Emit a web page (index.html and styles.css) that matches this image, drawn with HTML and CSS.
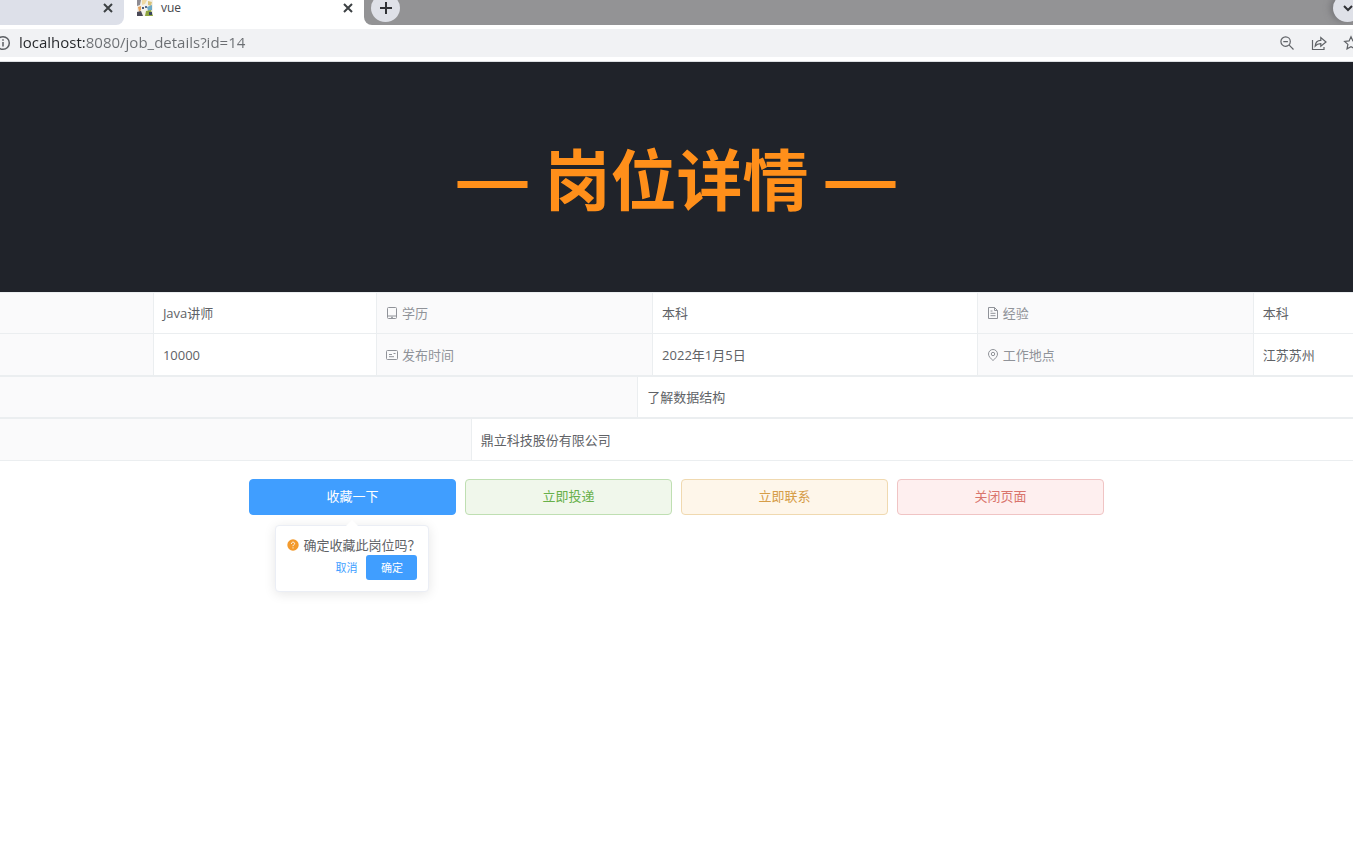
FILE: index.html
```html
<!DOCTYPE html>
<html lang="zh-CN">
<head>
<meta charset="utf-8">
<title>vue</title>
<link rel="stylesheet" href="styles.css">
</head>
<body>
<header class="browser">
  <div class="tabs">
    <div class="tab tab-idle">
      <button class="close" aria-label="关闭标签页"><svg width="10" height="10" viewBox="0 0 10 10"><path d="M1 1l8 8M9 1L1 9"/></svg></button>
    </div>
    <div class="tab tab-active">
      <svg class="favicon" width="16" height="16" viewBox="0 0 16 16">
        <rect width="16" height="16" fill="#f4f1ea"/>
        <path d="M0 0h4L3 5 0 6z" fill="#8d8b92"/><path d="M5 0h5L8 4 5 5z" fill="#f0d9a4"/>
        <path d="M11 1l4 1-1 4-3-1z" fill="#d8c279"/><path d="M1 7l3-1v4l-2 2z" fill="#e5a25c"/>
        <path d="M10 7l5-2v5l-4 1z" fill="#6eaac7"/><path d="M0 12l4-1 2 5H0z" fill="#4b4a58"/>
        <path d="M9 11l5-1 2 6H8z" fill="#8da53f"/><path d="M12 12h3v3h-3z" fill="#39465e"/>
        <path d="M5 7h2v2H5z" fill="#4d5b78"/><path d="M8 6h2v2H8z" fill="#5b6d93"/>
      </svg>
      <span class="tab-title">vue</span>
      <button class="close" aria-label="关闭标签页"><svg width="10" height="10" viewBox="0 0 10 10"><path d="M1 1l8 8M9 1L1 9"/></svg></button>
    </div>
    <div class="strip">
      <button class="round" aria-label="新标签页"><svg width="14" height="14" viewBox="0 0 14 14"><path d="M7 1v12M1 7h12"/></svg></button>
      <button class="round round-end" aria-label="搜索标签页"><svg width="12" height="12" viewBox="0 0 12 12"><path d="M2 4l4 4 4-4"/></svg></button>
    </div>
  </div>
  <div class="address">
    <svg class="info" width="16" height="16" viewBox="0 0 16 16"><circle cx="8" cy="8" r="6.3"/><path d="M8 7v4.5M8 4.2v1.6"/></svg>
    <input class="url" type="text" aria-label="地址" value="localhost:8080/job_details?id=14">
    <div class="tools">
      <button class="tool" aria-label="缩放"><svg width="16" height="16" viewBox="0 0 16 16"><circle cx="6.6" cy="6.6" r="4.7"/><path d="M4.3 6.6h4.6M10.2 10.2l4.3 4.3"/></svg></button>
      <button class="tool" aria-label="分享"><svg width="16" height="16" viewBox="0 0 16 16"><path d="M1.500 5v9.500h11.500V12M4.200 11c.3-3.800 2.300-5.700 5.600-5.700V2.500L15 7l-5.200 4.300V8.600C7.300 8.600 5.600 9.300 4.200 11z"/></svg></button>
      <button class="tool" aria-label="收藏网页"><svg width="16" height="16" viewBox="0 0 16 16"><path d="M8 1.800l1.900 4.100 4.500.5-3.300 3 .9 4.500L8 11.700l-4 2.200.9-4.500-3.300-3 4.500-.5z"/></svg></button>
    </div>
  </div>
</header>
<main>
  <div class="hero">
    <h1 class="title"><span class="dash">—</span><span>岗位详情</span><span class="dash">—</span></h1>
  </div>
  <table class="info-table">
    <colgroup><col class="c1"><col class="c2"><col class="c3"><col class="c4"><col class="c3"><col></colgroup>
    <tr>
      <td class="blank"></td><td>Java讲师</td>
      <th scope="row"><svg class="ico" width="12" height="12" viewBox="0 0 12 12"><rect x="1.500" y=".5" width="9" height="11" rx="1"/><path d="M1.500 9h9M5 10.300h2"/></svg>学历</th><td>本科</td>
      <th scope="row"><svg class="ico" width="12" height="12" viewBox="0 0 12 12"><path d="M1.500.5h6l3 3v8h-9zM7.500.5v3h3M3.500 4h2M3.500 6.300h5M3.500 8.700h5"/></svg>经验</th><td>本科</td>
    </tr>
    <tr class="tall">
      <td class="blank"></td><td>10000</td>
      <th scope="row"><svg class="ico" width="12" height="12" viewBox="0 0 12 12"><rect x=".5" y="1.500" width="11" height="9" rx="1"/><path d="M3 5.500h3M3 7.700h5M7.500 4.500h2"/></svg>发布时间</th><td>2022年1月5日</td>
      <th scope="row"><svg class="ico" width="12" height="12" viewBox="0 0 12 12"><path d="M6 11.500C3.500 9.300 1.500 7.400 1.500 5a4.500 4.500 0 019 0c0 2.400-2 4.300-4.500 6.500z"/><circle cx="6" cy="5" r="1.700"/></svg>工作地点</th><td>江苏苏州</td>
    </tr>
  </table>
  <table class="info-table">
    <colgroup><col class="skill"><col></colgroup>
    <tr><td class="blank"></td><td>了解数据结构</td></tr>
  </table>
  <table class="info-table">
    <colgroup><col class="firm"><col></colgroup>
    <tr class="tall"><td class="blank"></td><td>鼎立科技股份有限公司</td></tr>
  </table>
  <div class="actions">
    <div class="anchor">
      <button class="btn primary">收藏一下</button>
      <div class="pop" role="dialog" aria-labelledby="ask">
        <p class="ask"><svg width="12" height="12" viewBox="0 0 12 12"><circle cx="6" cy="6" r="5.700" fill="#f39a2d"/><path d="M4.400 4.800c0-2.200 3.300-2.100 3.200-.1C7.500 5.800 6 5.800 6 7.200M6 8.400v1" fill="none" stroke="#fff"/></svg><span id="ask">确定收藏此岗位吗？</span></p>
        <div class="pop-actions"><button class="cancel">取消</button><button class="ok">确定</button></div>
      </div>
    </div>
    <button class="btn success">立即投递</button>
    <button class="btn warning">立即联系</button>
    <button class="btn danger">关闭页面</button>
  </div>
</main>
</body>
</html>
```
FILE: styles.css
```css
* { box-sizing: border-box; }
body {
  margin: 0;
  min-height: 100vh;
  background: #fff;
  color: #606266;
  font: 13px/20px "Open Sans", "Noto Sans CJK SC", sans-serif;
}
button, input { font: inherit; }
button { margin: 0; padding: 0; border: 0; background: none; cursor: pointer; }
svg { display: block; flex: none; }

/* browser bar */
.browser { border-bottom: 1px solid #dcdfe2; background: #fff; }
.tabs { display: flex; height: 25px; overflow: hidden; }
.tab { display: flex; align-items: center; padding: 0 11px 9px 13px; }
.tab-idle { width: 124px; justify-content: flex-end; background: #dde0e9; border-radius: 0 0 8px 0; }
.tab-active { width: 240px; }
.tab-title { flex: 1; margin-left: 8px; font-size: 12px; color: #45474b; }
.close svg { fill: none; stroke: #3c4043; stroke-width: 2; }
.strip {
  flex: 1;
  display: flex;
  justify-content: space-between;
  align-items: flex-end;
  padding: 0 0 3px 7px;
  background: #939395;
  border-radius: 0 0 0 8px;
}
.round {
  display: grid;
  place-items: center;
  flex: none;
  width: 29px;
  height: 28px;
  border-radius: 50%;
  background: #dfe1e8;
}
.round svg { fill: none; stroke: #303236; stroke-width: 2; }
.round-end { margin-right: -9px; box-shadow: -3px 0 6px #77777a; }
.address {
  display: flex;
  align-items: center;
  height: 28px;
  margin: 4px 0;
  background: #f1f2f4;
  overflow: hidden;
}
.info { margin-left: -5px; fill: none; stroke: #5b5e62; stroke-width: 1.5; }
.url {
  flex: 1;
  min-width: 0;
  height: 28px;
  margin-left: 8px;
  padding: 0 0 2px;
  border: 0;
  outline: 0;
  font-size: 15px;
  background: linear-gradient(90deg, #25272a 66px, #6b6e72 66px);
  -webkit-background-clip: text;
  background-clip: text;
  color: transparent;
}
.tools { display: flex; gap: 16px; margin-right: -6px; }
.tool svg { fill: none; stroke: #606367; stroke-width: 1.2; }

/* heading */
.hero {
  display: flex;
  justify-content: center;
  align-items: center;
  height: 230px;
  padding-top: 4px;
  background: #20232a;
}
.title {
  display: flex;
  align-items: center;
  gap: 17px;
  margin: 0;
  color: #ff8f1a;
  font-size: 66px;
  line-height: 80px;
  font-weight: 700;
}
.dash { font-family: "Liberation Sans", sans-serif; font-size: 70px; }

/* details */
.info-table { width: 100%; table-layout: fixed; border-collapse: separate; border-spacing: 0; border-bottom: 1px solid #ebeef0; }
.info-table td, .info-table th {
  height: 41px;
  padding: 0 9px;
  border-top: 1px solid #ebeef0;
  border-left: 1px solid #ebeef0;
  text-align: left;
  font-weight: 400;
}
.info-table .tall td, .info-table .tall th { height: 42px; }
.info-table th { background: #fafafb; color: #909399; }
.info-table .blank { background: #fafafb; border-left: 0; }
.ico { display: inline-block; margin-right: 4px; vertical-align: -1px; fill: none; stroke: #909399; }
.c1 { width: 11.3%; }
.c2 { width: 16.5%; }
.c3 { width: 20.4%; }
.c4 { width: 24%; }
.skill { width: 47.1%; }
.firm { width: 34.8%; }

/* actions */
.actions {
  display: grid;
  grid-template-columns: repeat(4, 1fr);
  gap: 9px;
  width: 63.2%;
  margin: 18px auto;
}
.anchor { position: relative; }
.btn { width: 100%; height: 36px; padding-bottom: 2px; border: 1px solid; border-radius: 4px; }
.primary { background: #409eff; border-color: #409eff; color: #fff; }
.success { background: #f0f7eb; border-color: #bfdfb2; color: #67b04a; }
.warning { background: #fef6ea; border-color: #f0d9b0; color: #d69d48; }
.danger { background: #feefef; border-color: #f0c4c4; color: #d9746c; }
.pop {
  position: absolute;
  top: 46px;
  left: 50%;
  width: 154px;
  margin-left: -77px;
  padding: 9px 11px 11px;
  background: #fff;
  border: 1px solid #ebeef5;
  border-radius: 4px;
  box-shadow: 0 2px 12px rgba(0, 0, 0, .1);
}
.pop::before {
  content: "";
  position: absolute;
  top: -6px;
  left: 50%;
  margin-left: -6px;
  border: 6px solid transparent;
  border-top: 0;
  border-bottom-color: #fff;
}
.ask { display: flex; align-items: center; gap: 4px; margin: 0; white-space: nowrap; }
.pop-actions { display: flex; justify-content: flex-end; gap: 9px; font-size: 11px; }
.cancel { color: #409eff; }
.ok { width: 51px; height: 25px; border-radius: 3px; background: #409eff; color: #fff; }
```
